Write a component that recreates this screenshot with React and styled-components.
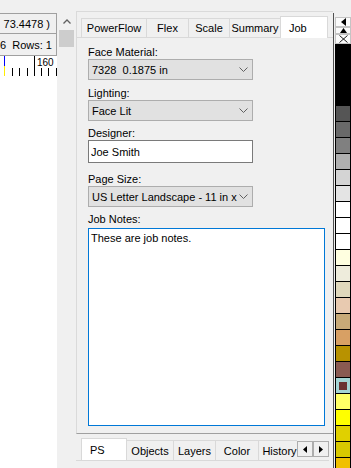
import React from 'react';
import styled, { createGlobalStyle } from 'styled-components';

const GlobalStyle = createGlobalStyle`
  html, body {
    margin: 0;
    padding: 0;
    background: #f0f0f0;
  }
  body {
    font-family: "Liberation Sans", Arial, sans-serif;
    font-size: 11px;
    color: #000;
  }
`;

const SWATCHES = [
  '#555555', '#696969', '#808080', '#b0b0b0', '#d4d4d4', '#e4e4e4',
  '#ffffff', '#ffffff', '#ffffff', '#ffffe0', '#eeecdc', '#e0d8bc',
  '#e8cab0', '#c8aa78', '#d8a064', '#b89200', '#8a5a52', 'selected',
  '#ffff66', '#ffff00', '#e0d000', '#d8c800', '#f0c000',
];

const TOP_TABS = [
  { label: 'PowerFlow', w: 66 },
  { label: 'Flex', w: 43 },
  { label: 'Scale', w: 42 },
  { label: 'Summary', w: 52 },
  { label: 'Job', w: 48, active: true },
];

const BOTTOM_TABS = [
  { label: 'PS', w: 46, active: true },
  { label: 'Objects', w: 48 },
  { label: 'Layers', w: 43 },
  { label: 'Color', w: 44 },
  { label: 'History', w: 43 },
];

const Chevron = () => (
  <svg width="9" height="5" viewBox="0 0 9 5">
    <path d="M0.5 0.5 L4.5 4.5 L8.5 0.5" fill="none" stroke="#606060" />
  </svg>
);

const Ruler = () => (
  <svg width="57" height="21" viewBox="0 0 57 21">
    <rect x="0" y="0" width="57" height="21" fill="#fff" />
    <line x1="0" y1="0.5" x2="57" y2="0.5" stroke="#a0a0a0" />
    <line x1="4.5" y1="1" x2="4.5" y2="11" stroke="#0000ff" />
    <line x1="4.5" y1="11" x2="4.5" y2="21" stroke="#ffee00" />
    {[12, 19, 27, 41, 48, 56].map((x) => (
      <line key={x} x1={x + 0.5} y1="13" x2={x + 0.5} y2="21" stroke="#000" />
    ))}
    <line x1="34.5" y1="1" x2="34.5" y2="21" stroke="#000" />
    <text x="37" y="11" fontSize="10" fontFamily="Liberation Sans, sans-serif" fill="#000">160</text>
  </svg>
);

// Основная разметка окна
const App = () => {
  return (
    <Window>
      <GlobalStyle />
      <LeftPane>
        <Sheet>
          <InfoRow $h={20} $align="flex-end">73.4478 )</InfoRow>
          <InfoRow $h={22} $align="flex-start">6&nbsp; Rows: 1</InfoRow>
          <Ruler />
        </Sheet>
        <ScrollBar>
          <ScrollUp>
            <svg width="8" height="5" viewBox="0 0 8 5">
              <path d="M0.5 4.5 L4 1 L7.5 4.5" fill="none" stroke="#606060" strokeWidth="1.3" />
            </svg>
          </ScrollUp>
          <ScrollThumb />
        </ScrollBar>
      </LeftPane>

      <MainColumn>
        <JobPanel>
          <TabStrip $h={26} $pad={5}>
            {TOP_TABS.map((t) => (
              <Tab key={t.label} $w={t.w} $h={t.active ? 22 : 19} $active={t.active}>
                {t.label}
              </Tab>
            ))}
          </TabStrip>
          <Pane>
            <Field>
              <Label>Face Material:</Label>
              <ComboBox>
                <ComboText>7328&nbsp; 0.1875 in</ComboText>
                <Chevron />
              </ComboBox>
            </Field>
            <Field $top={7}>
              <Label>Lighting:</Label>
              <ComboBox>
                <ComboText>Face Lit</ComboText>
                <Chevron />
              </ComboBox>
            </Field>
            <Field $top={6}>
              <Label>Designer:</Label>
              <TextInput value="Joe Smith" readOnly />
            </Field>
            <Field $top={10}>
              <Label>Page Size:</Label>
              <ComboBox>
                <ComboText>US Letter Landscape - 11 in x</ComboText>
                <Chevron />
              </ComboBox>
            </Field>
            <Field $top={6}>
              <Label>Job Notes:</Label>
              <Notes value="These are job notes." readOnly />
            </Field>
          </Pane>
        </JobPanel>

        <BottomTabs>
          <TabStrip $h={27} $pad={5}>
            <TabsClip>
              {BOTTOM_TABS.map((t) => (
                <Tab key={t.label} $w={t.w} $h={t.active ? 23 : 20} $active={t.active}>
                  {t.label}
                </Tab>
              ))}
            </TabsClip>
            <ScrollButtons>
              <SmallButton>
                <svg width="4" height="7" viewBox="0 0 4 7"><path d="M4 0 L0 3.5 L4 7 Z" fill="#000" /></svg>
              </SmallButton>
              <SmallButton>
                <svg width="4" height="7" viewBox="0 0 4 7"><path d="M0 0 L4 3.5 L0 7 Z" fill="#000" /></svg>
              </SmallButton>
            </ScrollButtons>
          </TabStrip>
        </BottomTabs>
      </MainColumn>

      <Divider />

      <Palette>
        <PaletteButton>
          <svg width="5" height="8" viewBox="0 0 5 8"><path d="M5 0 L0 4 L5 8 Z" fill="#000" /></svg>
        </PaletteButton>
        <PaletteButton>
          <svg width="7" height="5" viewBox="0 0 7 5"><path d="M0 5 L3.5 0 L7 5 Z" fill="#000" /></svg>
        </PaletteButton>
        <PaletteButton>
          <svg width="9" height="8" viewBox="0 0 9 8">
            <path d="M0.5 0.5 L8.5 7.5 M8.5 0.5 L0.5 7.5" stroke="#000" strokeWidth="0.9" />
          </svg>
        </PaletteButton>
        <SwatchColumn>
          {SWATCHES.map((c, i) =>
            c === 'selected' ? (
              <Swatch key={i} $color="#a4d4d4">
                <SwatchMark />
              </Swatch>
            ) : (
              <Swatch key={i} $color={c} />
            )
          )}
        </SwatchColumn>
      </Palette>
    </Window>
  );
};

const Window = styled.div`
  display: flex;
  width: 351px;
  height: 468px;
  overflow: hidden;
  background: #f0f0f0;
`;

// Левая часть с таблицей и полосой прокрутки
const LeftPane = styled.div`
  display: flex;
  flex-shrink: 0;
  width: 76px;
  padding-top: 13px;
  box-sizing: border-box;
`;

const Sheet = styled.div`
  display: flex;
  flex-direction: column;
  width: 57px;
  background: #fff;
`;

const InfoRow = styled.div`
  display: flex;
  align-items: center;
  justify-content: ${(p) => p.$align};
  height: ${(p) => p.$h}px;
  box-sizing: border-box;
  padding: 0 6px 0 0;
  border-top: 1px solid #a0a0a0;
  border-right: 1px solid #a0a0a0;
  background: #f0f0f0;
  white-space: nowrap;
  overflow: hidden;
`;

const ScrollBar = styled.div`
  display: flex;
  flex-direction: column;
  align-items: center;
  width: 19px;
  background: #f0f0f0;
`;

const ScrollUp = styled.div`
  display: flex;
  align-items: center;
  justify-content: center;
  width: 100%;
  height: 17px;
`;

const ScrollThumb = styled.div`
  width: 15px;
  height: 17px;
  background: #cdcdcd;
`;

const MainColumn = styled.div`
  display: flex;
  flex-direction: column;
  flex-shrink: 0;
  width: 257px;
  padding-top: 11px;
  box-sizing: border-box;
`;

const JobPanel = styled.div`
  display: flex;
  flex-direction: column;
  flex: 1;
  border-top: 1px solid #dadada;
  border-left: 1px solid #dadada;
  border-bottom: 1px solid #a0a0a0;
`;

const TabStrip = styled.div`
  display: flex;
  align-items: flex-end;
  height: ${(p) => p.$h}px;
  box-sizing: border-box;
  padding-left: ${(p) => p.$pad}px;
  border-bottom: 1px solid #d9d9d9;
`;

const Tab = styled.div`
  display: flex;
  align-items: center;
  justify-content: ${(p) => (p.$active ? 'flex-start' : 'center')};
  flex-shrink: 0;
  position: relative;
  z-index: ${(p) => (p.$active ? 1 : 0)};
  width: ${(p) => p.$w}px;
  height: ${(p) => p.$h}px;
  box-sizing: border-box;
  margin-left: -1px;
  margin-bottom: ${(p) => (p.$active ? -1 : 0)}px;
  padding-left: ${(p) => (p.$active ? 8 : 0)}px;
  border: 1px solid #d9d9d9;
  border-bottom: none;
  background: ${(p) => (p.$active ? '#fff' : '#f0f0f0')};
  white-space: nowrap;
`;

const Pane = styled.div`
  display: flex;
  flex-direction: column;
  padding: 8px 0 0 11px;
`;

const Field = styled.div`
  display: flex;
  flex-direction: column;
  margin-top: ${(p) => p.$top || 0}px;
`;

const Label = styled.div`
  height: 13px;
  line-height: 13px;
  white-space: nowrap;
`;

const ComboBox = styled.div`
  display: flex;
  align-items: center;
  width: 165px;
  height: 21px;
  box-sizing: border-box;
  padding: 0 4px 0 3px;
  border: 1px solid #adadad;
  background: #e1e1e1;
`;

const ComboText = styled.span`
  flex: 1;
  overflow: hidden;
  white-space: nowrap;
`;

const TextInput = styled.input`
  width: 165px;
  height: 23px;
  box-sizing: border-box;
  margin: 0;
  padding: 0 2px;
  border: 1px solid #7a7a7a;
  background: #fff;
  font: inherit;
  color: #000;
  outline: none;
`;

const Notes = styled.textarea`
  width: 237px;
  height: 198px;
  box-sizing: border-box;
  margin: 2px 0 0;
  padding: 3px 2px;
  border: 1px solid #0078d7;
  background: #fff;
  font: inherit;
  line-height: 13px;
  color: #000;
  resize: none;
  outline: none;
`;

const BottomTabs = styled.div`
  height: 34px;
  padding-right: 4px;
`;

const TabsClip = styled.div`
  display: flex;
  align-items: flex-end;
  flex: 1;
  height: 100%;
  overflow: hidden;
  padding-left: 1px;
`;

const ScrollButtons = styled.div`
  display: flex;
  align-self: flex-start;
  margin-top: 7px;
`;

const SmallButton = styled.div`
  display: flex;
  align-items: center;
  justify-content: center;
  width: 16px;
  height: 16px;
  box-sizing: border-box;
  border: 1px solid #adadad;
  background: #f0f0f0;
`;

const Divider = styled.div`
  width: 1px;
  margin-top: 13px;
  margin-right: 1px;
  background: #505050;
`;

// Палитра цветов справа
const Palette = styled.div`
  display: flex;
  flex-direction: column;
  width: 16px;
  padding-top: 17px;
  box-sizing: border-box;
`;

const PaletteButton = styled.div`
  display: flex;
  align-items: center;
  justify-content: center;
  height: 10px;
  box-sizing: border-box;
  border: 1px solid #c4c4c4;
  background: #fbfbfb;
`;

const SwatchColumn = styled.div`
  display: flex;
  flex-direction: column;
  gap: 1px;
  flex: 1;
  padding: 62px 1px 0 1px;
  background: #000;
`;

const Swatch = styled.div`
  display: flex;
  align-items: center;
  justify-content: center;
  flex-shrink: 0;
  height: 15px;
  background: ${(p) => p.$color};
`;

const SwatchMark = styled.div`
  width: 8px;
  height: 8px;
  background: #6b3232;
`;

export default App;
